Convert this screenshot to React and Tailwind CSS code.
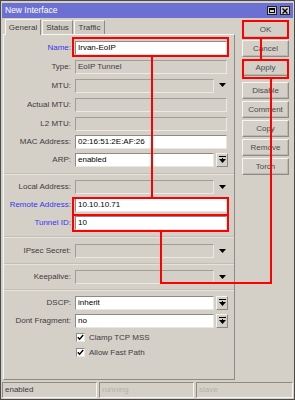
import React from "react";

const FONT = "font-['Liberation_Sans',Arial,sans-serif]";

function Label({ text, blue }) {
  return (
    <div
      className={`w-[67px] shrink-0 text-right text-[8px] leading-none whitespace-nowrap ${
        blue ? "text-[#3636ee]" : "text-[#3c3c3c]"
      }`}
    >
      {text}:
    </div>
  );
}

function Box({ value, white, w }) {
  return (
    <div
      className={`${w} h-[14px] flex items-center pl-[2px] text-[8px] leading-none whitespace-nowrap border ${
        white
          ? "bg-white text-black border-t-[#8e8b85] border-l-[#8e8b85] border-b-[#e9e7e2] border-r-[#e9e7e2]"
          : "bg-[#d4d0c8] text-[#3c3c3c] border-t-[#a19e97] border-l-[#a19e97] border-b-[#ebe9e4] border-r-[#ebe9e4]"
      }`}
    >
      {value}
    </div>
  );
}

function Tri() {
  return (
    <svg width="7" height="5" viewBox="0 0 7 5">
      <polygon points="0,0 7,0 3.5,4" fill="#000" />
    </svg>
  );
}

function DropBtn() {
  return (
    <div className="ml-[2px] w-[12px] h-[14px] flex items-center justify-center border border-t-[#f4f3f0] border-l-[#f4f3f0] border-b-[#8e8b85] border-r-[#8e8b85] bg-[#d4d0c8]">
      <svg width="7" height="8" viewBox="0 0 7 8">
        <rect x="0" y="0" width="7" height="1" fill="#000" />
        <rect x="3" y="2" width="1" height="2" fill="#000" />
        <polygon points="0,3 7,3 3.5,7" fill="#000" />
      </svg>
    </div>
  );
}

function Row({ label, blue, h, children }) {
  return (
    <div className={`flex items-center ${h}`}>
      <Label text={label} blue={blue} />
      <div className="ml-[4px] flex items-center">{children}</div>
    </div>
  );
}

function Sep({ h }) {
  return (
    <div className={`${h} flex items-center`}>
      <div className="w-full border-t border-t-[#c2beb6] border-b border-b-[#e6e3dd]" />
    </div>
  );
}

function Check({ label }) {
  return (
    <div className="flex items-center h-[15px]">
      <div className="ml-[72px] w-[9px] h-[9px] bg-white border border-t-[#8e8b85] border-l-[#8e8b85] border-b-[#e9e7e2] border-r-[#e9e7e2] flex items-center justify-center">
        <svg width="7" height="7" viewBox="0 0 7 7">
          <polyline points="0.8,3.2 2.6,5.2 6.2,1" fill="none" stroke="#000" strokeWidth="1.4" />
        </svg>
      </div>
      <div className="ml-[4px] text-[8px] leading-none text-[#3c3c3c] whitespace-nowrap">{label}</div>
    </div>
  );
}

function Btn({ label, extra = "" }) {
  return (
    <div
      className={`w-[47px] h-[17px] flex items-center justify-center text-[8px] leading-none text-[#4a4a4a] bg-[#d4d0c8] border border-t-[#f6f5f2] border-l-[#f6f5f2] border-b-[#8e8b85] border-r-[#8e8b85] shadow-[inset_-1px_-1px_0_#bcb8b0] ${extra}`}
    >
      {label}
    </div>
  );
}

function Tab({ label, active }) {
  return (
    <div
      className={`flex items-center justify-center text-[8px] leading-none text-[#3c3c3c] border-t border-l border-r border-t-[#f6f5f2] border-l-[#f6f5f2] border-r-[#8e8b85] ${
        active ? "w-[36px] h-[16px] bg-[#d4d0c8] relative z-10 -mb-[1px]" : "w-[31px] h-[14px] bg-[#d0ccc4]"
      }`}
    >
      {label}
    </div>
  );
}

export default function App() {
  return (
    <div className={`w-[295px] h-[400px] bg-[#d4d0c8] relative overflow-hidden border border-[#4a4a4a] ${FONT}`}>
      <div className="flex flex-col h-full p-[1px]">
        {/* title bar */}
        <div className="mt-[1px] h-[15px] bg-[#6c70d2] flex items-center justify-between pl-[3px] pr-[3px]">
          <div className="text-white text-[8.5px] leading-none">New Interface</div>
          <div className="flex items-center gap-[3px]">
            <div className="w-[10px] h-[9px] bg-[#d4d0c8] border border-[#222] flex items-center justify-center">
              <div className="w-[6px] h-[5px] border border-[#000] border-t-2" />
            </div>
            <div className="w-[10px] h-[9px] bg-[#d4d0c8] border border-[#222] flex items-center justify-center">
              <svg width="6" height="6" viewBox="0 0 6 6">
                <path d="M0.5 0.5 L5.5 5.5 M5.5 0.5 L0.5 5.5" stroke="#000" strokeWidth="1.4" />
              </svg>
            </div>
          </div>
        </div>

        {/* body */}
        <div className="flex flex-1">
          {/* left: tabs + panel */}
          <div className="ml-[1px] w-[232px] flex flex-col">
            <div className="flex items-end h-[16px] pl-[2px] gap-[1px]">
              <Tab label="General" active />
              <Tab label="Status" />
              <Tab label="Traffic" />
            </div>
            <div className="flex-1 flex flex-col border border-t-[#f6f5f2] border-l-[#f6f5f2] border-b-[#8e8b85] border-r-[#8e8b85] pt-[3px]">
              <Row label="Name" blue h="h-[19px]">
                <Box white value="Irvan-EoIP" w="w-[152px]" />
              </Row>
              <Row label="Type" h="h-[19px]">
                <Box value="EoIP Tunnel" w="w-[152px]" />
              </Row>
              <Row label="MTU" h="h-[19px]">
                <Box value="" w="w-[139px]" />
                <div className="w-[14px] flex justify-center ml-[1px]"><Tri /></div>
              </Row>
              <Row label="Actual MTU" h="h-[19px]">
                <Box value="" w="w-[152px]" />
              </Row>
              <Row label="L2 MTU" h="h-[19px]">
                <Box value="" w="w-[152px]" />
              </Row>
              <Row label="MAC Address" h="h-[18px]">
                <Box white value="02:16:51:2E:AF:26" w="w-[152px]" />
              </Row>
              <Row label="ARP" h="h-[18px]">
                <Box white value="enabled" w="w-[139px]" />
                <DropBtn />
              </Row>
              <Sep h="h-[9px]" />
              <Row label="Local Address" h="h-[18px]">
                <Box value="" w="w-[139px]" />
                <div className="w-[14px] flex justify-center ml-[1px]"><Tri /></div>
              </Row>
              <Row label="Remote Address" blue h="h-[18px]">
                <Box white value="10.10.10.71" w="w-[152px]" />
              </Row>
              <Row label="Tunnel ID" blue h="h-[18px]">
                <Box white value="10" w="w-[152px]" />
              </Row>
              <Sep h="h-[10px]" />
              <Row label="IPsec Secret" h="h-[18px]">
                <Box value="" w="w-[139px]" />
                <div className="w-[14px] flex justify-center ml-[1px]"><Tri /></div>
              </Row>
              <Sep h="h-[8px]" />
              <Row label="Keepalive" h="h-[18px]">
                <Box value="" w="w-[139px]" />
                <div className="w-[14px] flex justify-center ml-[1px]"><Tri /></div>
              </Row>
              <Sep h="h-[8px]" />
              <Row label="DSCP" h="h-[18px]">
                <Box white value="inherit" w="w-[139px]" />
                <DropBtn />
              </Row>
              <Row label="Dont Fragment" h="h-[18px]">
                <Box white value="no" w="w-[139px]" />
                <DropBtn />
              </Row>
              <Check label="Clamp TCP MSS" />
              <Check label="Allow Fast Path" />
            </div>
          </div>

          {/* right: buttons */}
          <div className="ml-[7px] flex flex-col pt-[3px]">
            <Btn label="OK" />
            <Btn label="Cancel" extra="mt-[2px]" />
            <Btn label="Apply" extra="mt-[2px]" />
            <Btn label="Disable" extra="mt-[6px]" />
            <Btn label="Comment" extra="mt-[2px]" />
            <Btn label="Copy" extra="mt-[2px]" />
            <Btn label="Remove" extra="mt-[2px]" />
            <Btn label="Torch" extra="mt-[2px]" />
          </div>
        </div>

        {/* status bar */}
        <div className="mt-[2px] h-[16px] flex gap-[2px] pl-[0px]">
          <div className="w-[95px] h-full flex items-center pl-[2px] text-[8px] leading-none text-[#3c3c3c] border border-t-[#8e8b85] border-l-[#8e8b85] border-b-[#f6f5f2] border-r-[#f6f5f2]">
            enabled
          </div>
          <div className="w-[95px] h-full flex items-center pl-[2px] text-[8px] leading-none text-[#b3b0a9] border border-t-[#8e8b85] border-l-[#8e8b85] border-b-[#f6f5f2] border-r-[#f6f5f2]">
            running
          </div>
          <div className="flex-1 h-full flex items-center pl-[2px] text-[8px] leading-none text-[#b3b0a9] border border-t-[#8e8b85] border-l-[#8e8b85] border-b-[#f6f5f2] border-r-[#f6f5f2]">
            slave
          </div>
        </div>
      </div>

      {/* red annotation overlay */}
      <svg className="absolute left-[-1px] top-[-1px] pointer-events-none" width="295" height="400" viewBox="0 0 295 400">
        <g fill="none" stroke="#f00" strokeWidth="2">
          <rect x="73" y="38" width="155" height="18" />
          <rect x="243" y="21" width="45" height="17" />
          <rect x="243" y="60" width="45" height="18" />
          <rect x="73" y="198" width="155" height="33" />
          <line x1="73" y1="215" x2="228" y2="215" />
          <line x1="152" y1="57" x2="152" y2="197" />
          <line x1="261" y1="39" x2="261" y2="59" />
          <polyline points="271,79 271,283 161,283 161,232" />
        </g>
      </svg>
    </div>
  );
}
